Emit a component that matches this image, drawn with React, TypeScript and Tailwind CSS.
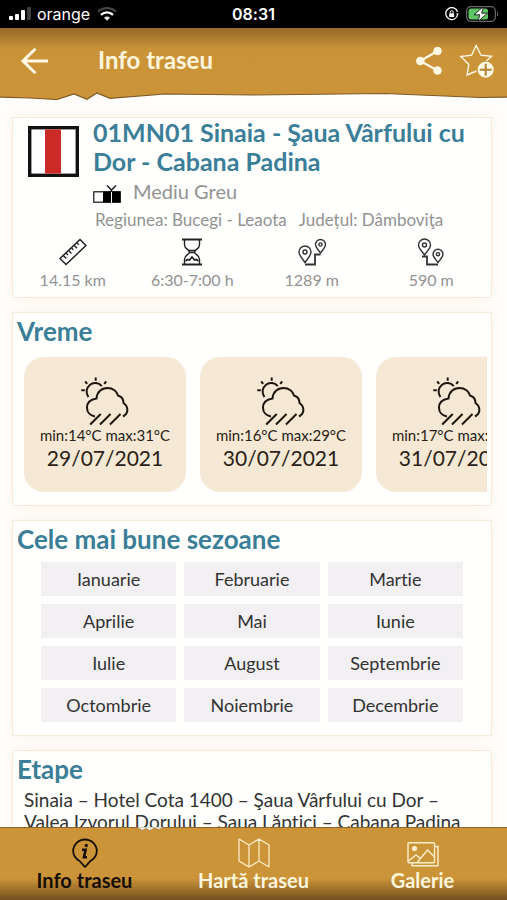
import type { ReactNode } from 'react'

const forecast = [
  { min: 14, max: 31, date: '29/07/2021' },
  { min: 16, max: 29, date: '30/07/2021' },
  { min: 17, max: 30, date: '31/07/2021' },
]

const months = [
  'Ianuarie', 'Februarie', 'Martie',
  'Aprilie', 'Mai', 'Iunie',
  'Iulie', 'August', 'Septembrie',
  'Octombrie', 'Noiembrie', 'Decembrie',
]

function StatusBar() {
  return (
    <div className="grid h-7 shrink-0 grid-cols-3 items-center bg-black px-2 font-[Inter,sans-serif] text-[15px] text-white">
      <div className="flex items-center gap-[5px]">
        <svg width="24" height="14" viewBox="0 0 24 14" fill="#fff">
          <rect x="1" y="9" width="4" height="4" rx="1" />
          <rect x="7" y="7" width="4" height="6" rx="1" />
          <rect x="13" y="3" width="4" height="10" rx="1" />
          <rect x="19" y="0" width="4" height="13" rx="1" opacity="0.25" />
        </svg>
        <span className="text-base">orange</span>
        <svg className="ml-0.5" width="20" height="14" viewBox="0 0 20 14" fill="none" strokeWidth="2.4">
          <path d="M1 4.5C6 0 14 0 19 4.5" stroke="#444" />
          <path d="M4 7.8C7.5 4.6 12.5 4.6 16 7.8" stroke="#fff" />
          <path d="M7.5 10.8C9 9.6 11 9.6 12.5 10.8L10 13.2z" fill="#fff" stroke="#fff" strokeWidth="0.8" />
        </svg>
      </div>
      <div className="text-center text-base font-semibold">08:31</div>
      <div className="flex items-center justify-end gap-[7px]">
        <svg width="14" height="14" viewBox="0 0 14 14" fill="none" stroke="#fff" strokeWidth="1.3">
          <path d="M12.7 7.5A6 6 0 1 1 12.5 4.8" />
          <path d="M10.9 6.5h3l-1.4 2z" fill="#fff" stroke="none" />
          <rect x="4.2" y="6.3" width="5" height="3.7" rx="0.6" fill="#fff" stroke="none" />
          <path d="M5.2 6.5V5.2a1.5 1.5 0 0 1 3 0v1.3" strokeWidth="1" />
        </svg>
        <svg width="33" height="16" viewBox="0 0 33 16" fill="none">
          <rect x="0.7" y="0.7" width="28.6" height="14.6" rx="4" stroke="#6b6b6b" strokeWidth="1.2" />
          <path d="M31 5.5c1.5.6 1.5 4.4 0 5z" fill="#6b6b6b" />
          <rect x="2.5" y="2.5" width="19.5" height="11" rx="2.5" fill="#5fc466" />
          <path d="M17.5 0.5L8 8.8h5.8L12 15.5l9.5-8.3h-5.8z" fill="#fff" stroke="#000" strokeWidth="0.8" />
        </svg>
      </div>
    </div>
  )
}

function Header() {
  return (
    <header className="shrink-0 bg-linear-to-b from-[#94692a] via-[#cb9337] via-30% to-[#cc9438]">
      <div className="flex h-16 items-center pr-3 pl-5">
        <button aria-label="Înapoi">
          <svg width="30" height="28" viewBox="0 0 30 28" fill="none" stroke="#fff9e6" strokeWidth="3">
            <path d="M28 15H3M15.5 2.800L3 15l12.500 12.200" />
          </svg>
        </button>
        <h1 className="ml-12 flex-1 text-2xl font-bold text-[#fff6dd]">Info traseu</h1>
        <button aria-label="Distribuie">
          <svg width="28" height="30" viewBox="0 0 28 30" fill="#fff9e6" stroke="#fff9e6">
            <path d="M22.500 6L5.300 16 22.500 25.500" fill="none" strokeWidth="2.200" />
            <circle cx="22.500" cy="6" r="3.800" />
            <circle cx="5.300" cy="16" r="3.800" />
            <circle cx="22.500" cy="25.500" r="3.800" />
          </svg>
        </button>
        <button aria-label="Adaugă la favorite" className="ml-4">
          <svg width="36" height="36" viewBox="0 0 36 36" fill="none" stroke="#fff9e6" strokeWidth="1.4">
            <path d="M17.500 29L8 33 9.800 22.500 1.800 14.500 12.600 13.200 17.200 3.500 22 13.200 32.500 14.200 27.500 19" />
            <circle cx="26.700" cy="27.700" r="7.300" fill="#fff9e6" />
            <path d="M26.700 21.700v12M20.700 27.700h12" stroke="#b98231" strokeWidth="2" />
          </svg>
        </button>
      </div>
      <svg className="block h-2 w-full" viewBox="0 0 507 8" preserveAspectRatio="none">
        <path
          d="M-2 5L30 6 57 7.500 74 2 87 7.300 97 1 110 6.300 165 2 253 3 385 1.500 480 5.500 509 5V12H-2z"
          fill="#fffefc"
          stroke="#7d5a26"
          strokeWidth="1.2"
        />
      </svg>
    </header>
  )
}

function Card({ children, className = '' }: { children: ReactNode; className?: string }) {
  return (
    <section className={`border border-[#f6ead9] bg-[#fffffe] shadow-[0_0_12px_#fbf1e4] ${className}`}>
      {children}
    </section>
  )
}

function CardTitle({ children }: { children: ReactNode }) {
  return <h2 className="px-1 text-[26px] leading-8 font-bold text-[#3a7e98]">{children}</h2>
}

function RulerIcon() {
  return (
    <svg width="28" height="28" viewBox="0 0 28 28" fill="none" stroke="#222" strokeWidth="1.5">
      <path d="M21 1.500l6 6L7 26.500 1 20.500z" />
      <path d="M4.300 17.500l3 3M7 15l2 2M9.500 12.500l3 3M12.300 9.800l2 2M15 7.300l3 3M17.800 4.700l2 2" strokeWidth="1.4" />
    </svg>
  )
}

function HourglassIcon() {
  return (
    <svg width="22" height="28" viewBox="0 0 22 28" fill="none" stroke="#222" strokeWidth="1.4">
      <path d="M1 1.500h20M1 26.500h20" strokeWidth="2" />
      <path d="M3.500 2v5c0 4 5 4.500 5 7s-5 3-5 7v5M18.500 2v5c0 4-5 4.500-5 7s5 3 5 7v5" />
      <path d="M7 12.500h8M8 14.500h6" strokeWidth="1.4" />
      <path d="M4.500 23l2-1.500 2 .5 2.500-3 2.500 3 2-.5 2 1.500" strokeWidth="1.7" />
    </svg>
  )
}

function ClimbIcon() {
  return (
    <svg width="28" height="28" viewBox="0 0 28 28" fill="none" stroke="#333" strokeWidth="1.4">
      <path d="M7 24.500C4 20 1 17.500 1 14a6 6 0 0 1 12 0c0 3.500-3 6-6 10.500z" />
      <circle cx="7" cy="14" r="2" />
      <path d="M22.500 15C20 11.500 17.500 9.300 17.500 6.500a5 5 0 0 1 10 0c0 2.800-2.500 5-5 8.500z" />
      <circle cx="22.500" cy="6.500" r="1.600" />
      <path d="M7 26.500h10V16.500h5.500" strokeWidth="1.8" />
    </svg>
  )
}

function DescentIcon() {
  return (
    <svg width="28" height="28" viewBox="0 0 28 28" fill="none" stroke="#333" strokeWidth="1.4">
      <path d="M7.500 17C4.500 12.500 1.500 10.500 1.500 7a6 6 0 0 1 12 0c0 3.500-3 5.500-6 10z" />
      <circle cx="7.500" cy="7" r="2" />
      <path d="M21 24.500c-2.500-3.500-5-5.500-5-8.300a5 5 0 0 1 10 0c0 2.800-2.500 4.800-5 8.300z" />
      <circle cx="21" cy="16.200" r="1.600" />
      <path d="M5 18.500h5v8h11" strokeWidth="1.8" />
    </svg>
  )
}

function RainIcon() {
  return (
    <svg width="50" height="50" viewBox="-1 0 50 50" fill="none" stroke="#1c150d" strokeWidth="2">
      <path d="M14 39.500C8.500 38.500 6 34.500 6 30.500C6 26 9.500 22.500 15.500 21.500C16 15 20.500 11 26.500 11C32 11 36 14.500 37 18.500C40.500 19.500 42.500 22.500 42.500 26C47 29 48.500 36 42 39.500" />
      <path d="M7.500 20A7.800 7.800 0 0 1 20.800 9.200" />
      <path d="M14.700 0.500v3.300M4.200 4.500l2 2.400M25.200 4.500l-2 2.400M0.300 13.300h3.500" />
      <path d="M19.700 37l-10.500 10.500M29.500 37l-10.500 10.500M39.500 37l-10.500 10.500" />
    </svg>
  )
}

const stats = [
  { icon: <RulerIcon />, value: '14.15 km' },
  { icon: <HourglassIcon />, value: '6:30-7:00 h' },
  { icon: <ClimbIcon />, value: '1289 m' },
  { icon: <DescentIcon />, value: '590 m' },
]

function TrailSummary() {
  return (
    <Card className="pb-[3px]">
      <div className="flex gap-[14px] pl-[15px]">
        <svg className="mt-2 shrink-0" width="51" height="51" viewBox="0 0 51 51">
          <rect x="1.700" y="1.700" width="47.600" height="47.600" fill="#fff" stroke="#111" strokeWidth="3.4" />
          <rect x="17" y="3.400" width="16" height="44.200" fill="#cb2a27" />
        </svg>
        <div className="min-w-0">
          <h2 className="text-[25px] leading-[29px] font-bold text-[#3a7e98]">
            01MN01 Sinaia - Şaua Vârfului cu Dor - Cabana Padina
          </h2>
          <div className="flex items-center gap-3 text-xl leading-[31px] text-[#929292]">
            <svg className="mt-1" width="28" height="18" viewBox="0 0 28 18" fill="none">
              <rect x="0.800" y="6.800" width="26.400" height="10.400" fill="#fff" stroke="#111" strokeWidth="1.2" />
              <path d="M10 6.500h17.500v11H10z" fill="#000" />
              <path d="M18.500 5v13" stroke="#fff" strokeWidth="1" />
              <path d="M14 0.500l4.500 4.500L23 0.500M18.500 5v2" stroke="#111" strokeWidth="1.4" />
            </svg>
            Mediu Greu
          </div>
          <p className="flex gap-3 pl-0.5 text-[17px] leading-[26px] whitespace-nowrap text-[#929292]">
            <span>Regiunea: Bucegi - Leaota</span>
            <span>Județul: Dâmboviţa</span>
          </p>
        </div>
      </div>
      <div className="mt-[5px] grid grid-cols-4">
        {stats.map((s) => (
          <div key={s.value} className="flex flex-col items-center text-base leading-7 text-[#929292]">
            {s.icon}
            {s.value}
          </div>
        ))}
      </div>
    </Card>
  )
}

function Weather() {
  return (
    <Card className="pt-0.5 pr-1 pb-[13px]">
      <CardTitle>Vreme</CardTitle>
      <div className="mt-2.5 ml-[11px] flex gap-[14px] overflow-x-auto [scrollbar-width:none]">
        {forecast.map((day) => (
          <div
            key={day.date}
            className="flex h-[135px] w-[162px] shrink-0 flex-col items-center rounded-[20px] bg-[#f5e9d5] pt-5 text-[#2b2116]"
          >
            <RainIcon />
            <span className="text-[15px] leading-4 whitespace-nowrap">
              min:{day.min}°C max:{day.max}°C
            </span>
            <span className="text-[21px] leading-[30px]">{day.date}</span>
          </div>
        ))}
      </div>
    </Card>
  )
}

function Seasons() {
  return (
    <Card className="pt-0.5 pb-[13px]">
      <CardTitle>Cele mai bune sezoane</CardTitle>
      <ul className="mt-[7px] grid grid-cols-3 gap-2 px-7 text-lg text-[#333]">
        {months.map((m) => (
          <li key={m} className="flex h-[34px] items-center justify-center bg-[#f2f0f2]">
            {m}
          </li>
        ))}
      </ul>
    </Card>
  )
}

function Stages() {
  return (
    <Card className="pt-0.5 pb-4">
      <CardTitle>Etape</CardTitle>
      <p className="mt-1 pr-1 pl-[11px] text-[19px] leading-[22px] text-[#333]">
        Sinaia – Hotel Cota 1400 – Şaua Vârfului cu Dor – Valea Izvorul Dorului – Şaua Lăptici – Cabana Padina
      </p>
    </Card>
  )
}

function TabBar() {
  return (
    <nav className="relative grid h-[73px] shrink-0 grid-cols-3 border-t border-[#8d662b] bg-linear-to-b from-[#cc9438] from-70% to-[#73501f] text-xl leading-6 font-bold text-[#fff6dd]">
      <svg className="absolute -top-px left-[27%]" width="28" height="5" viewBox="0 0 28 5">
        <path d="M0 0L5 3.500 9 1.500 13 3.500 17 1 22 2.500 27 0z" fill="#fffefc" stroke="#8d662b" strokeWidth="0.6" />
      </svg>
      <a href="#info" aria-current="page" className="flex flex-col items-center pt-2.5 text-[#160e04]">
        <svg width="26" height="30" viewBox="0 0 26 30" fill="none" stroke="#160e04" strokeWidth="1.8">
          <path d="M13 29L7.500 23C3.500 20.500 1.200 17 1.200 13a11.800 11.500 0 0 1 23.600 0c0 4-2.300 7.500-6.300 10z" />
          <circle cx="14.300" cy="7.500" r="1.700" fill="#160e04" stroke="none" />
          <path d="M10 11.800h3.600l-1.600 7.400h3" strokeWidth="2.600" />
        </svg>
        Info traseu
      </a>
      <a href="#harta" className="flex flex-col items-center pt-2.5">
        <svg width="32" height="30" viewBox="0 0 32 30" fill="none" stroke="#fff0cc" strokeWidth="1.2" strokeLinejoin="round">
          <path d="M1 1l10 6 10-6 10 6v22l-10-6-10 6-10-6zM11 7v22M21 1v22" />
        </svg>
        Hartă traseu
      </a>
      <a href="#galerie" className="flex flex-col items-center pt-2.5">
        <svg width="32" height="30" viewBox="0 0 32 30" fill="none" stroke="#fff0cc" strokeWidth="1.4">
          <rect x="1" y="4.700" width="26.500" height="20" rx="1" />
          <path d="M27.500 8.500H31v19.200H5v-3" />
          <path d="M1.500 23l7.500-6 5 4M10.500 24l10-12 7 7" />
          <circle cx="7.500" cy="10.500" r="2.600" fill="#fff0cc" stroke="none" />
        </svg>
        Galerie
      </a>
    </nav>
  )
}

export default function App() {
  return (
    <div className="flex h-screen flex-col bg-[#fffefc] font-[Lato,'Open_Sans',sans-serif] [font-variant-ligatures:none]">
      <StatusBar />
      <Header />
      <main className="flex min-h-0 flex-1 flex-col gap-[14px] overflow-y-auto pt-[17px] pr-[15px] pb-4 pl-3 [scrollbar-width:none] *:shrink-0">
        <TrailSummary />
        <Weather />
        <Seasons />
        <Stages />
      </main>
      <TabBar />
    </div>
  )
}
